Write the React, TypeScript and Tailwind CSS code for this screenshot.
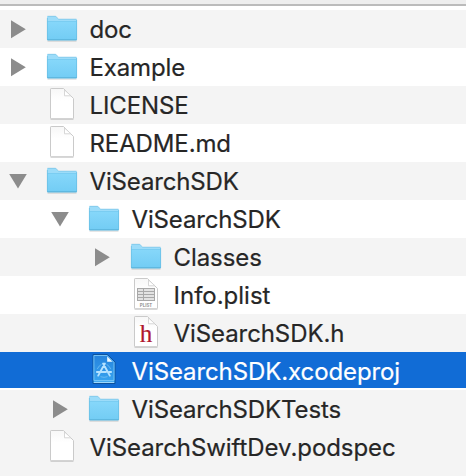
import React from "react";

type Kind = "folder" | "file" | "plist" | "header" | "xcode";

interface Item {
  name: string;
  kind: Kind;
  pad: string;
  row: string;
  spacing: string;
  arrow?: "right" | "down";
}

const items: Item[] = [
  { name: "doc", kind: "folder", arrow: "right", pad: "pl-0", row: "bg-[#f4f4f4]", spacing: "tracking-[-0.2px]" },
  { name: "Example", kind: "folder", arrow: "right", pad: "pl-0", row: "bg-white", spacing: "tracking-[-0.15px]" },
  { name: "LICENSE", kind: "file", pad: "pl-0", row: "bg-[#f4f4f4]", spacing: "tracking-[-0.1px]" },
  { name: "README.md", kind: "file", pad: "pl-0", row: "bg-white", spacing: "tracking-[-0.12px]" },
  { name: "ViSearchSDK", kind: "folder", arrow: "down", pad: "pl-0", row: "bg-[#f4f4f4]", spacing: "tracking-[-0.15px]" },
  { name: "ViSearchSDK", kind: "folder", arrow: "down", pad: "pl-[42px]", row: "bg-white", spacing: "tracking-[-0.15px]" },
  { name: "Classes", kind: "folder", arrow: "right", pad: "pl-[84px]", row: "bg-[#f4f4f4]", spacing: "tracking-[-0.08px]" },
  { name: "Info.plist", kind: "plist", pad: "pl-[84px]", row: "bg-white", spacing: "tracking-[0px]" },
  { name: "ViSearchSDK.h", kind: "header", pad: "pl-[84px]", row: "bg-[#f4f4f4]", spacing: "tracking-[-0.08px]" },
  { name: "ViSearchSDK.xcodeproj", kind: "xcode", pad: "pl-[42px]", row: "bg-[#116cd6] text-white border-b-2 border-white", spacing: "tracking-[-0.1px]" },
  { name: "ViSearchSDKTests", kind: "folder", arrow: "right", pad: "pl-[42px]", row: "bg-[#f4f4f4]", spacing: "tracking-[-0.12px]" },
  { name: "ViSearchSwiftDev.podspec", kind: "file", pad: "pl-0", row: "bg-[#f4f4f4]", spacing: "tracking-[-0.07px]" },
];

function Arrow({ dir }: { dir?: "right" | "down" }) {
  return (
    <svg className="ml-[9px] block h-[38px] w-[37px] shrink-0" viewBox="0 0 37 38" fill="#8c8c8c">
      {dir === "right" && <path d="M2 10.2 L16.8 19.2 L2 28.2Z" />}
      {dir === "down" && <path d="M0.2 12 H17.8 L9 26.6Z" />}
    </svg>
  );
}

function Folder() {
  return (
    <>
      <path d="M1.5 31 H30.5" stroke="#000" strokeOpacity=".2" strokeWidth="1" />
      <path d="M1 29.5 V7.2 Q1 6 2.2 6 H9 Q10 6 10.7 7 L11.8 8.4 Q12.2 9 13 9 H29.8 Q31 9 31 10.2 V29.5 Q31 30.2 30 30.2 H2 Q1 30.2 1 29.5Z" fill="#9cdcf9" />
      <path d="M1 11.5 H31 V29.5 Q31 30.2 30 30.2 H2 Q1 30.2 1 29.5Z" fill="url(#folderFace)" />
      <path d="M1.5 11.5 H30.5" stroke="#6bc4ec" strokeWidth="0.6" />
      <path d="M1.4 8 V29.5 M30.6 10 V29.5" stroke="#67bde3" strokeWidth=".7" />
      <path d="M1.5 6.3 H9.3 Q10.2 6.4 10.7 7.2 L11.8 8.6 Q12.2 9.2 13 9.2 H30.5" fill="none" stroke="#78c4e6" strokeWidth=".7" />
      <path d="M1.3 29.8 H30.7" stroke="#4fa8d0" strokeWidth=".8" />
    </>
  );
}

function Page() {
  return (
    <>
      <path d="M4.5 33.2 H27.5" stroke="#000" strokeOpacity=".2" strokeWidth="1" />
      <path d="M4.5 3.2 Q4.5 2.5 5.2 2.5 H17.5 L27.5 12.5 V32 Q27.5 32.7 26.8 32.7 H5.2 Q4.5 32.7 4.5 32Z" fill="url(#paper)" stroke="#cacaca" strokeWidth="1" />
      <path d="M18.5 4 V9.8 H25Z" fill="#fff" stroke="#d2d2d2" strokeWidth=".9" />
    </>
  );
}

function Icon({ kind }: { kind: Kind }) {
  return (
    <svg className="block h-[38px] w-8 shrink-0" viewBox="0 0 32 38">
      {kind === "folder" && <Folder />}
      {(kind === "file" || kind === "plist" || kind === "header") && <Page />}
      {kind === "plist" && (
        <>
          <rect x="7.5" y="12.5" width="17" height="12" fill="#e2e2e2" stroke="#a8a8a8" strokeWidth="1" />
          <path d="M7.5 15.5h17M7.5 18.5h17M7.5 21.5h17M13.5 12.5v12" stroke="#a8a8a8" strokeWidth="1" />
          <text x="16" y="31.2" textAnchor="middle" fontFamily="Inter, sans-serif" fontSize="5.4" fontWeight="600" fill="#888" textLength="12.5" lengthAdjust="spacingAndGlyphs">PLIST</text>
        </>
      )}
      {kind === "header" && (
        <text x="16" y="27.6" textAnchor="middle" fontFamily="Liberation Serif, serif" fontSize="25" fill="#b0162d" stroke="#b0162d" strokeWidth=".2">h</text>
      )}
      {kind === "xcode" && (
        <>
          <path d="M5 2.5 H19.5 L27 10 V31.5 H5Z" fill="url(#project)" stroke="#0d529c" strokeWidth="1" />
          <path d="M5.9 3.5 H19 L26 10.5 V28.5 H5.9Z" fill="none" stroke="#79c6f6" strokeWidth=".9" />
          <path d="M5.8 30.4 H26.2" stroke="#a9defd" strokeWidth="1" />
          <path d="M19.2 4.5 V9.7 H24.4Z" fill="#f1faff" />
          <g fill="none" stroke="#b5e2ff" strokeWidth="1.9" strokeLinecap="round">
            <path d="M15.1 11.5 L21.8 23.6 M16.9 11.5 L10.2 23.6 M8.9 20 H18 M21 20 H23.1" />
          </g>
          <path d="M9.3 17 Q11 13.5 13.5 12.3 M18.5 12.3 Q21.5 14 22.7 17 M12.5 24.7 Q16 26 19.5 24.7" fill="none" stroke="#7dc5f5" strokeWidth=".7" />
        </>
      )}
    </svg>
  );
}

export default function App() {
  return (
    <main className="h-[476px] w-[466px] overflow-hidden bg-[#f4f4f4] font-['Inter',sans-serif] text-[24px] text-[#262626]">
      <svg className="absolute h-0 w-0" aria-hidden="true">
        <defs>
          <linearGradient id="folderFace" x1="0" y1="0" x2="0" y2="1">
            <stop stopColor="#86d7fa" />
            <stop offset="1" stopColor="#72ccf4" />
          </linearGradient>
          <linearGradient id="paper" x1="0" y1="0" x2="0" y2="1">
            <stop stopColor="#f7f7f7" />
            <stop offset=".4" stopColor="#fff" />
          </linearGradient>
          <linearGradient id="project" x1="0" y1="0" x2="0" y2="1">
            <stop stopColor="#2582dc" />
            <stop offset="1" stopColor="#39a6f1" />
          </linearGradient>
        </defs>
      </svg>
      <header className="h-[10px] border-b-4 border-white bg-[#eeeeee]">
        <div className="h-[6px] border-b-2 border-[#bbbbbb]" />
      </header>
      <ul>
        {items.map((item, i) => (
          <li key={i} className={`flex h-[38px] items-start ${item.pad} ${item.row}`}>
            <Arrow dir={item.arrow} />
            <Icon kind={item.kind} />
            <span className={`ml-[11.5px] whitespace-nowrap leading-[40px] [-webkit-text-stroke:0.2px_currentColor] ${item.spacing}`}>{item.name}</span>
          </li>
        ))}
      </ul>
    </main>
  );
}
